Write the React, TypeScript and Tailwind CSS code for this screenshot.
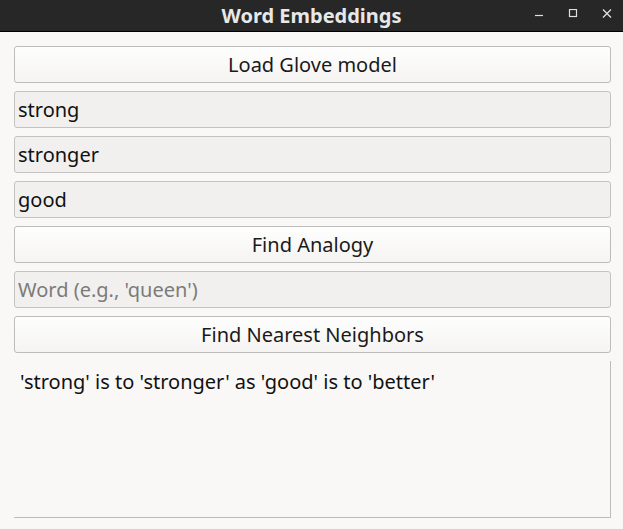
const font = { fontFamily: '"Noto Sans", "Open Sans", sans-serif' };

const Btn = ({ label }: { label: string }) => (
  <button className="h-[37px] w-full rounded-[3px] border border-[#bdbcba] bg-gradient-to-b from-[#fefefe] to-[#f5f4f2] text-[20px] text-[#1a1a1a]">
    {label}
  </button>
);

const Field = ({ value, placeholder }: { value?: string; placeholder?: string }) => (
  <div className="flex h-[37px] w-full items-center rounded-[3px] border border-[#c4c3c1] bg-[#f1f0ee] px-[3px] text-[20px]">
    {value ? (
      <span className="text-[#111]">{value}</span>
    ) : (
      <span className="text-[#7c7b79]">{placeholder}</span>
    )}
  </div>
);

export default function App() {
  return (
    <div className="flex h-[529px] w-[623px] flex-col bg-[#f9f8f6]" style={font}>
      {/* Title bar */}
      <div className="relative flex h-[32px] items-center justify-center border-b border-black bg-[#272727]">
        <span className="text-[20px] font-bold text-[#e8e8e8]">Word Embeddings</span>
        <div className="absolute right-[11px] top-[9px] flex items-start gap-[24px] text-[#e0e0e0]">
          <svg width="10" height="10" viewBox="0 0 10 10">
            <line x1="1" y1="6.5" x2="9" y2="6.5" stroke="currentColor" strokeWidth="1.2" />
          </svg>
          <svg width="10" height="10" viewBox="0 0 10 10">
            <rect x="1.5" y="0.5" width="7" height="7" fill="none" stroke="currentColor" strokeWidth="1.2" />
          </svg>
          <svg width="10" height="10" viewBox="0 0 10 10">
            <path d="M1 0.5 L9 8.5 M9 0.5 L1 8.5" stroke="currentColor" strokeWidth="1.3" />
          </svg>
        </div>
      </div>

      <div className="flex flex-1 flex-col gap-[8px] pb-[11px] pl-[14px] pr-[12px] pt-[14px]">
        <Btn label="Load Glove model" />
        <Field value="strong" />
        <Field value="stronger" />
        <Field value="good" />
        <Btn label="Find Analogy" />
        <Field placeholder="Word (e.g., 'queen')" />
        <Btn label="Find Nearest Neighbors" />
        <div className="flex-1 border-b border-r border-[#bdbcba] px-[6px] pt-[6px] text-[20px] text-[#111]">
          'strong' is to 'stronger' as 'good' is to 'better'
        </div>
      </div>
    </div>
  );
}
